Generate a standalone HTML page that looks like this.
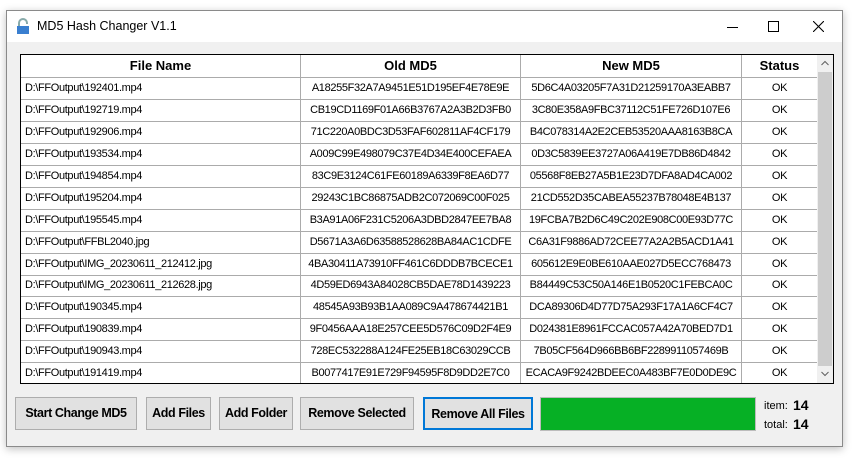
<!DOCTYPE html>
<html><head><style>
*{box-sizing:border-box;}
body{margin:0;width:858px;height:460px;background:#fff;position:relative;overflow:hidden;font-family:"Liberation Sans",sans-serif;}
.win{position:absolute;left:6px;top:10px;width:837px;height:437px;background:#f0f0f0;border:1px solid #8a8a8a;box-shadow:0 2px 8px rgba(0,0,0,.25);}
.title{position:absolute;left:0;top:0;width:835px;height:31px;background:#fff;}
.title span{position:absolute;left:30px;top:8px;font-size:12.5px;color:#000;}
.abs{position:absolute;}
.tbl{position:absolute;left:13px;top:43px;width:814px;height:330px;border:1px solid #000;background:#fff;overflow:hidden;}
.row{position:absolute;left:0;width:796px;height:22px;border-bottom:1px solid #ababab;font-size:11px;letter-spacing:-0.35px;}
.row div{position:absolute;top:0;height:21px;line-height:21px;border-right:1px solid #ababab;white-space:nowrap;overflow:hidden;}
.c1{left:0;width:280px;padding-left:4px;}
.c2{left:280px;width:220px;text-align:center;}
.c3{left:500px;width:221px;text-align:center;}
.c4{left:721px;width:75px;text-align:center;border-right:none!important;}
.hdr div{font-weight:bold;font-size:13px;letter-spacing:0;}
.sb{position:absolute;left:796px;top:0;width:16px;height:328px;background:#f0f0f0;}
.btn{position:absolute;top:386px;height:33px;background:#e1e1e1;border:1px solid #adadad;font-size:12.5px;font-weight:bold;letter-spacing:-0.4px;text-align:center;line-height:31px;}
</style></head><body>
<div class="win">
<div class="title">
<svg class="abs" style="left:8px;top:7px" width="16" height="17" viewBox="0 0 16 17"><path d="M4 8V5a4 4 0 0 1 8 0v1" stroke="#8aa" stroke-width="2" fill="none"/><rect x="2" y="8" width="12" height="8" fill="#3a7fd0"/></svg>
<span>MD5 Hash Changer V1.1</span>
<div class="abs" style="left:720px;top:16px;width:11px;height:1px;background:#000"></div>
<div class="abs" style="left:761px;top:10px;width:11px;height:11px;border:1px solid #000"></div>
<svg class="abs" style="left:806px;top:10px" width="11" height="11"><path d="M0 0L11 11M11 0L0 11" stroke="#000" stroke-width="1.1"/></svg>
</div>
<div class="tbl">
<div class="row hdr" style="top:0;height:23px"><div class="c1" style="text-align:center;padding:0;height:22px;line-height:22px">File Name</div><div class="c2" style="height:22px;line-height:22px">Old MD5</div><div class="c3" style="height:22px;line-height:22px">New MD5</div><div class="c4" style="height:22px;line-height:22px">Status</div></div>
<div class="row" style="top:23px"><div class="c1">D:\FFOutput\192401.mp4</div><div class="c2">A18255F32A7A9451E51D195EF4E78E9E</div><div class="c3">5D6C4A03205F7A31D21259170A3EABB7</div><div class="c4">OK</div></div>
<div class="row" style="top:45px"><div class="c1">D:\FFOutput\192719.mp4</div><div class="c2">CB19CD1169F01A66B3767A2A3B2D3FB0</div><div class="c3">3C80E358A9FBC37112C51FE726D107E6</div><div class="c4">OK</div></div>
<div class="row" style="top:67px"><div class="c1">D:\FFOutput\192906.mp4</div><div class="c2">71C220A0BDC3D53FAF602811AF4CF179</div><div class="c3">B4C078314A2E2CEB53520AAA8163B8CA</div><div class="c4">OK</div></div>
<div class="row" style="top:89px"><div class="c1">D:\FFOutput\193534.mp4</div><div class="c2">A009C99E498079C37E4D34E400CEFAEA</div><div class="c3">0D3C5839EE3727A06A419E7DB86D4842</div><div class="c4">OK</div></div>
<div class="row" style="top:111px"><div class="c1">D:\FFOutput\194854.mp4</div><div class="c2">83C9E3124C61FE60189A6339F8EA6D77</div><div class="c3">05568F8EB27A5B1E23D7DFA8AD4CA002</div><div class="c4">OK</div></div>
<div class="row" style="top:133px"><div class="c1">D:\FFOutput\195204.mp4</div><div class="c2">29243C1BC86875ADB2C072069C00F025</div><div class="c3">21CD552D35CABEA55237B78048E4B137</div><div class="c4">OK</div></div>
<div class="row" style="top:155px"><div class="c1">D:\FFOutput\195545.mp4</div><div class="c2">B3A91A06F231C5206A3DBD2847EE7BA8</div><div class="c3">19FCBA7B2D6C49C202E908C00E93D77C</div><div class="c4">OK</div></div>
<div class="row" style="top:177px"><div class="c1">D:\FFOutput\FFBL2040.jpg</div><div class="c2">D5671A3A6D63588528628BA84AC1CDFE</div><div class="c3">C6A31F9886AD72CEE77A2A2B5ACD1A41</div><div class="c4">OK</div></div>
<div class="row" style="top:199px"><div class="c1">D:\FFOutput\IMG_20230611_212412.jpg</div><div class="c2">4BA30411A73910FF461C6DDDB7BCECE1</div><div class="c3">605612E9E0BE610AAE027D5ECC768473</div><div class="c4">OK</div></div>
<div class="row" style="top:220px"><div class="c1">D:\FFOutput\IMG_20230611_212628.jpg</div><div class="c2">4D59ED6943A84028CB5DAE78D1439223</div><div class="c3">B84449C53C50A146E1B0520C1FEBCA0C</div><div class="c4">OK</div></div>
<div class="row" style="top:242px"><div class="c1">D:\FFOutput\190345.mp4</div><div class="c2">48545A93B93B1AA089C9A478674421B1</div><div class="c3">DCA89306D4D77D75A293F17A1A6CF4C7</div><div class="c4">OK</div></div>
<div class="row" style="top:264px"><div class="c1">D:\FFOutput\190839.mp4</div><div class="c2">9F0456AAA18E257CEE5D576C09D2F4E9</div><div class="c3">D024381E8961FCCAC057A42A70BED7D1</div><div class="c4">OK</div></div>
<div class="row" style="top:286px"><div class="c1">D:\FFOutput\190943.mp4</div><div class="c2">728EC532288A124FE25EB18C63029CCB</div><div class="c3">7B05CF564D966BB6BF2289911057469B</div><div class="c4">OK</div></div>
<div class="row" style="top:308px;border-bottom:none"><div class="c1">D:\FFOutput\191419.mp4</div><div class="c2">B0077417E91E729F94595F8D9DD2E7C0</div><div class="c3">ECACA9F9242BDEEC0A483BF7E0D0DE9C</div><div class="c4">OK</div></div>
<div class="sb">
<div class="abs" style="left:1px;top:17px;width:14px;height:294px;background:#cdcdcd"></div>
<svg class="abs" style="left:4px;top:5px" width="8" height="6"><path d="M0.5 5L4 1.5L7.5 5" stroke="#606060" fill="none"/></svg>
<svg class="abs" style="left:4px;top:316px" width="8" height="6"><path d="M0.5 1L4 4.5L7.5 1" stroke="#606060" fill="none"/></svg>
</div>
</div>
<div class="btn" style="left:8px;width:122px">Start Change MD5</div>
<div class="btn" style="left:139px;width:65px">Add Files</div>
<div class="btn" style="left:212px;width:74px">Add Folder</div>
<div class="btn" style="left:293px;width:114px">Remove Selected</div>
<div class="btn" style="left:416px;width:110px;border:2px solid #0078d7">Remove All Files</div>
<div class="abs" style="left:533px;top:386px;width:216px;height:34px;background:#06b025;border:1px solid #bcbcbc"></div>
<div class="abs" style="left:757px;top:389px;font-size:11px">item:</div>
<div class="abs" style="left:786px;top:386px;font-size:14px;font-weight:bold">14</div>
<div class="abs" style="left:757px;top:408px;font-size:11px">total:</div>
<div class="abs" style="left:786px;top:405px;font-size:14px;font-weight:bold">14</div>
</div>
</body></html>
